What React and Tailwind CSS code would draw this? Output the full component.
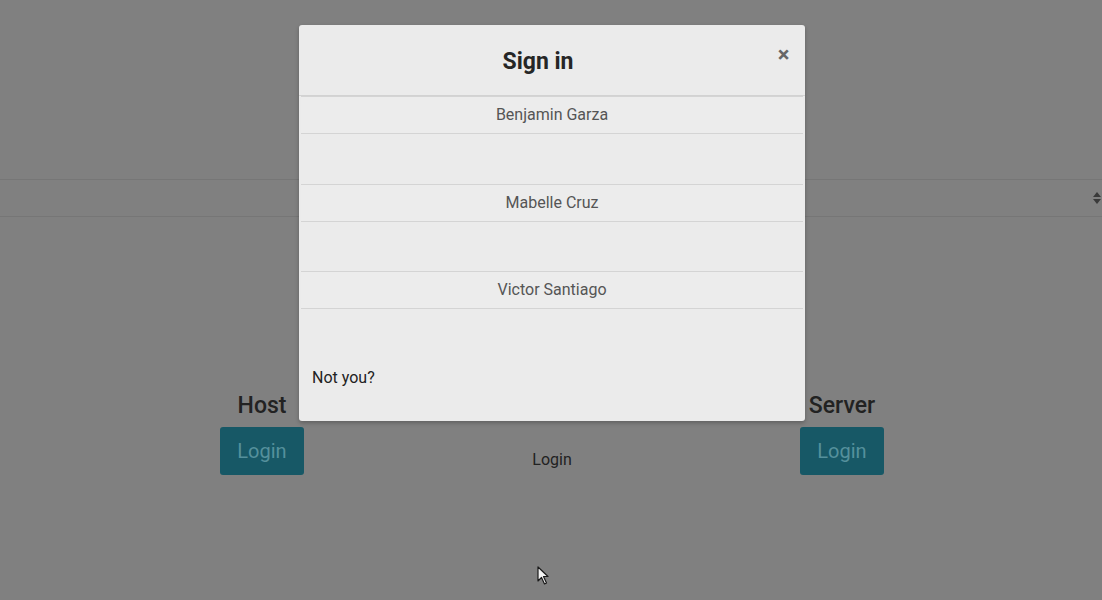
import React from "react";

const users = ["Benjamin Garza", "Mabelle Cruz", "Victor Santiago"];

function SortArrows() {
  return (
    <svg width="8" height="12" viewBox="0 0 8 12" className="text-[#3a3a3a]">
      <path d="M4 0 L8 5 H0 Z" fill="currentColor" />
      <path d="M4 12 L8 7 H0 Z" fill="currentColor" />
    </svg>
  );
}

function Cursor() {
  return (
    <svg width="14" height="20" viewBox="0 0 14 20">
      <path d="M1 1 L1 15 L4.5 11.5 L7.5 18 L9.5 17 L6.5 10.5 L11 10.5 Z" fill="#f4f4f4" stroke="#1a1a1a" strokeWidth="1.2" strokeLinejoin="round" />
    </svg>
  );
}

export default function App() {
  return (
    <div className="relative w-full h-[600px] overflow-hidden bg-[#808080] text-[#222] font-['Roboto','Liberation_Sans',sans-serif]">
      {/* page behind the overlay */}
      <div className="pt-[179px]">
        <div className="h-[38px] border-y border-[#767676] flex items-center justify-end pr-[1px]">
          <SortArrows />
        </div>
        <div className="mx-auto w-[872px] grid grid-cols-3 pt-[174px] pl-[2px]">
          <div className="flex flex-col items-center">
            <h3 className="text-[23px] leading-[30px] font-medium">Host</h3>
            <button className="mt-[6px] w-[84px] h-[48px] rounded-[3px] bg-[#175866] text-[#55909c] text-[20px]">Login</button>
          </div>
          <div className="flex flex-col items-center pt-[57px]">
            <span className="text-[16px]">Login</span>
          </div>
          <div className="flex flex-col items-center">
            <h3 className="text-[23px] leading-[30px] font-medium">Server</h3>
            <button className="mt-[6px] w-[84px] h-[48px] rounded-[3px] bg-[#175866] text-[#55909c] text-[20px]">Login</button>
          </div>
        </div>
      </div>

      {/* modal */}
      <div className="absolute left-[299px] top-[25px] w-[506px] h-[396px] bg-[#ebebeb] rounded-[3px] shadow-[0_2px_4px_rgba(0,0,0,0.25)] flex flex-col">
        <div className="h-[71px] flex items-center border-b border-[#d2d2d2] pl-[15px]">
          <h2 className="flex-1 text-center text-[23px] font-bold text-[#262626] pt-[4px]">Sign in</h2>
          <button className="w-[43px] h-[40px] -mt-[12px] flex items-center justify-center text-[#666] text-[22px] font-bold">×</button>
        </div>
        <ul className="mx-[2px]">
          {users.map((u) => (
            <li key={u} className="mb-[49.5px] last:mb-0">
              <div className="h-[38px] border-y border-[#d4d4d4] flex items-center justify-center text-[16px] text-[#555] bg-[#ececec]">
                {u}
              </div>
            </li>
          ))}
        </ul>
        <div className="mt-auto pb-[31px] px-[13px] text-[16px] text-[#222]">Not you?</div>
      </div>

      <div className="absolute left-[537px] top-[566px]">
        <Cursor />
      </div>
    </div>
  );
}
